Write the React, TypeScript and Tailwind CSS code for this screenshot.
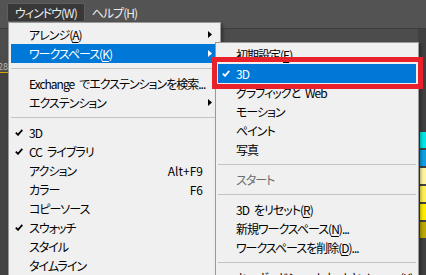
import React from 'react';

type Item =
  | 'sep'
  | {
      label: string;
      key?: string;
      tail?: string;
      check?: boolean;
      arrow?: boolean;
      shortcut?: string;
      active?: boolean;
      disabled?: boolean;
    };

// en space keeps the gaps visible under the tight tracking
const mainItems: Item[] = [
  { label: 'アレンジ', key: 'A', arrow: true },
  { label: 'ワークスペース', key: 'K', arrow: true, active: true },
  'sep',
  { label: 'Exchange\u2002でエクステンションを検索...' },
  { label: 'エクステンション', arrow: true },
  'sep',
  { label: '3D', check: true },
  { label: 'CC\u2002ライブラリ', check: true },
  { label: 'アクション', shortcut: 'Alt+F9' },
  { label: 'カラー', shortcut: 'F6' },
  { label: 'コピーソース' },
  { label: 'スウォッチ', check: true },
  { label: 'スタイル' },
  { label: 'タイムライン' },
];

const subItems: Item[] = [
  { label: '初期設定', key: 'E' },
  { label: '3D', check: true, active: true },
  { label: 'グラフィックと\u2002Web' },
  { label: 'モーション' },
  { label: 'ペイント' },
  { label: '写真' },
  'sep',
  { label: 'スタート', disabled: true },
  'sep',
  { label: '3D\u2002をリセット', key: 'R' },
  { label: '新規ワークスペース', key: 'N', tail: '...' },
  { label: 'ワークスペースを削除', key: 'D', tail: '...' },
  'sep',
  { label: 'キーボードショートカットとメニュー', key: 'K', tail: '...' },
];

const swatches = ['bg-[#00e6e6]', 'bg-[#0c9fe6]', 'bg-[#fff59c]', 'bg-[#fff052]', 'bg-[#ffec00]', 'bg-[#bda900]'];

function Check({ white }: { white?: boolean }) {
  return (
    <svg width="8" height="7" viewBox="0 0 8 7">
      <path d="M0.8 3.6 L3 5.8 L7.3 0.9" fill="none" stroke={white ? '#fff' : '#000'} strokeWidth="1.8" />
    </svg>
  );
}

function Arrow({ white }: { white?: boolean }) {
  return (
    <svg width="4" height="7" viewBox="0 0 4 7">
      <path d="M0 0 L4 3.5 L0 7 Z" fill={white ? '#fff' : '#000'} />
    </svg>
  );
}

function MenuRows({ items }: { items: Item[] }) {
  return (
    <>
      {items.map((it, i) => {
        if (it === 'sep') {
          return (
            <div key={i} className="h-[11px] flex items-center">
              <div className="h-px w-full bg-[#c3c3c3]" />
            </div>
          );
        }
        const color = it.active ? 'text-white' : it.disabled ? 'text-[#6d6d6d]' : 'text-black';
        return (
          <div
            key={i}
            className={`h-[19px] flex items-center ${it.active ? 'bg-[#0078d7]' : ''} ${color}`}
          >
            <div className="w-[18px] shrink-0 pl-[4px] flex items-center">{it.check && <Check white={it.active} />}</div>
            <div className="flex-1 min-w-0 whitespace-nowrap">
              {it.label}
              {it.key && (
                <>
                  (<span className="underline underline-offset-2">{it.key}</span>)
                </>
              )}
              {it.tail}
            </div>
            {it.shortcut && <div className="pr-[3px] tracking-normal">{it.shortcut}</div>}
            <div className="w-[12px] shrink-0 flex items-center justify-start pl-[2px]">{it.arrow && <Arrow white={it.active} />}</div>
          </div>
        );
      })}
    </>
  );
}

export default function App() {
  return (
    <div className="relative w-[426px] h-[275px] overflow-hidden bg-[#535353] [font-family:'Noto_Sans_CJK_JP','Noto_Sans',sans-serif] [font-feature-settings:'palt'] text-[12px] tracking-[-1px] leading-none">
      {/* app behind the menus */}
      <div className="flex flex-col h-full">
        <div className="h-[29px] shrink-0 border-b border-[#3e3e3e] flex items-start pt-[3px] pl-[7px] text-[#ececec]">
          <div className="h-[19px] px-[7px] flex items-center bg-[#383838] rounded-[2px] border border-[#5e5e5e]">ウィンドウ(W)</div>
          <div className="h-[19px] px-[7px] flex items-center">ヘルプ(H)</div>
        </div>
        <div className="flex-1 flex">
          <div className="flex-1 flex flex-col">
            <div className="h-[44px] bg-[#4c4c4c] border-b border-[#cfa800] flex items-end pb-[1px] text-[9px] text-[#bbbbbb] tracking-normal">
              <span className="-ml-[2px]">28</span>
            </div>
            <div className="flex-1 bg-[#424242]" />
          </div>
          <div className="w-[8px] flex flex-col pt-[103px] gap-[2px] bg-[#404040] pl-[2px]">
            {swatches.map((c) => (
              <div key={c} className={`h-[16px] ${c}`} />
            ))}
          </div>
        </div>
      </div>

      {/* ウィンドウ menu */}
      <div className="absolute left-[8px] top-[22px] w-[213px] bg-[#f0f0f0] border border-[#9a9a9a] p-[2px] shadow-[2px_2px_3px_rgba(0,0,0,0.35)]">
        <MenuRows items={mainItems} />
      </div>

      {/* ワークスペース submenu */}
      <div className="absolute left-[215px] top-[42px] w-[204px] bg-[#f0f0f0] border border-[#9a9a9a] p-[2px] shadow-[2px_2px_3px_rgba(0,0,0,0.35)]">
        <MenuRows items={subItems} />
      </div>

      {/* red highlight frame */}
      <div className="absolute left-[212px] top-[57px] w-[211px] h-[32px] border-[5px] border-[#e8212b]" />
    </div>
  );
}
